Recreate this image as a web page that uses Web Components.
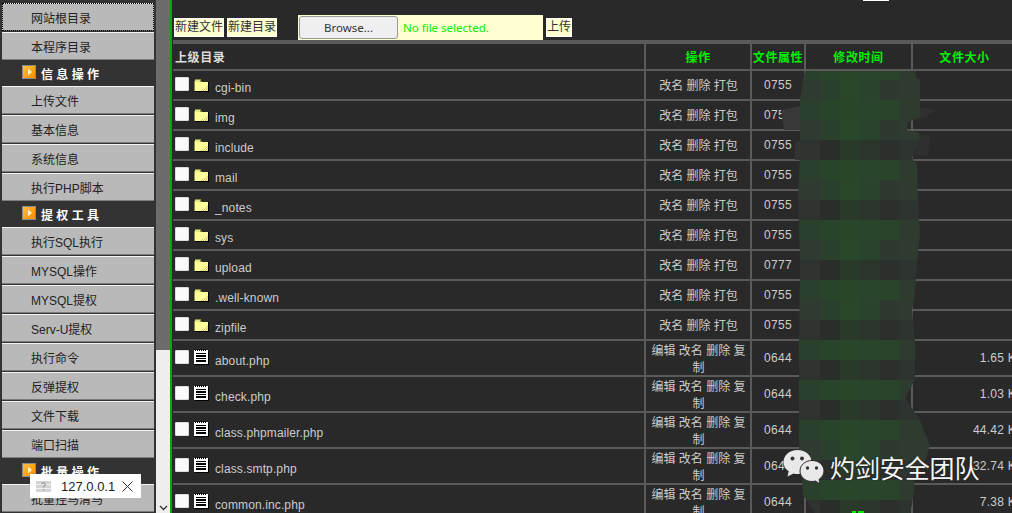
<!DOCTYPE html>
<html lang="zh">
<head>
<meta charset="utf-8">
<title>File manager</title>
<style>
  html,body{margin:0;padding:0;height:513px;overflow:hidden;background:#292929}
  body{font:12px "Liberation Sans","Noto Sans CJK SC",sans-serif;position:relative}
  #page{display:grid;grid-template-columns:156px 14px 2px 1fr;height:513px;width:1012px;overflow:hidden}
</style>
</head>
<body>
<template id="t-side-btn">
  <style>
    :host{display:flex;align-items:center;box-sizing:border-box;height:28px;margin:0 2px 1px 2px;padding:0 0 0 29px;background:#b9b9b9;color:#222;border-top:1px solid #f4f4f4;border-bottom:1px solid #7c7c7c;font-size:12px;white-space:nowrap;width:152px}
    :host([focused]){outline:1px dotted #000;outline-offset:-1px}
  </style><slot></slot>
</template>
<template id="t-side-head">
  <style>
    :host{display:flex;align-items:center;box-sizing:border-box;height:26px;padding-left:22px;gap:5px;color:#fff;font-weight:bold;font-size:12px;white-space:pre}
    svg{display:block;flex:none;margin-top:-3px}
  </style>
  <svg width="14" height="14" viewBox="0 0 14 14"><defs><linearGradient id="o" x1="0" y1="0" x2="1" y2="1"><stop offset="0" stop-color="#ffc040"/><stop offset="1" stop-color="#ff8a00"/></linearGradient></defs><rect x=".5" y=".5" width="13" height="13" fill="url(#o)" stroke="#8a8a8a"/><path d="M6 3.500 10 7 6 10.500Z" fill="#fff6c8"/></svg><slot></slot>
</template>
<template id="t-sidebar">
  <style>:host{display:block;background:#333;padding-top:3px;height:510px;overflow:hidden;position:relative}</style><slot></slot>
</template>
<template id="t-scroll">
  <style>
    :host{display:flex;flex-direction:column;background:#eee}
    .thumb{height:350px;background:#6c6c6c}
    .rest{flex:1;display:flex;align-items:flex-end;justify-content:center;padding-bottom:2px}
    svg{display:block}
  </style>
  <div class="thumb"></div><div class="rest"><svg width="9" height="6" viewBox="0 0 9 6"><path d="M1 1 4.500 4.500 8 1" fill="none" stroke="#333" stroke-width="1.3"/></svg></div>
</template>
<template id="t-tool-btn">
  <style>:host{display:block;box-sizing:border-box;height:19px;line-height:19px;padding:0 1px;background:#ffffcf;color:#333;font-size:12px;box-shadow:inset 0 0 0 1px #fff;white-space:nowrap}</style><slot></slot>
</template>
<template id="t-toolbar">
  <style>
    :host{display:flex;align-items:flex-end;height:40px;background:#292929;padding-left:1px;position:relative}
    x-tool-btn{margin-bottom:3px}
    .a{margin-left:3px}
    .file{display:flex;box-sizing:border-box;width:245px;height:25px;margin-left:21px;background:#ffffcf;padding:1px;align-items:center}
    .browse{box-sizing:border-box;width:99px;height:23px;background:#efefef;border:1px solid #9a9a9a;border-radius:3px;text-align:center;color:#333;font:11.500px/21px "Noto Sans",sans-serif}
    .none{margin-left:5px;color:#00f000;font:11.500px "Noto Sans",sans-serif}
    .up{margin-left:3px}
    .stub{position:absolute;left:690px;top:0;width:26px;height:1px;background:#fff}
  </style>
  <x-tool-btn>新建文件</x-tool-btn><x-tool-btn class="a">新建目录</x-tool-btn>
  <div class="file"><div class="browse">Browse...</div><div class="none">No file selected.</div></div>
  <x-tool-btn class="up">上传</x-tool-btn><div class="stub"></div>
</template>
<template id="t-table">
  <style>:host{display:block;background:#5a5a5a;padding-top:4px;width:843px}</style><slot></slot>
</template>
<template id="t-head">
  <style>
    :host{display:grid;grid-template-columns:471px 104px 52px 105px 103px;column-gap:2px;box-sizing:border-box;height:27px;padding-bottom:2px}
    div{background:#292929;display:flex;align-items:center;justify-content:center;color:#00f000;font-weight:bold;font-size:12px;letter-spacing:.6px;white-space:nowrap;box-sizing:border-box}
    .l{justify-content:flex-start;color:#ddd;padding-left:2px}
  </style>
  <div class="l">上级目录</div><div>操作</div><div>文件属性</div><div>修改时间</div><div>文件大小</div>
</template>
<template id="t-row">
  <style>
    :host{display:grid;grid-template-columns:471px 104px 52px 105px 103px;column-gap:2px;padding-bottom:2px;color:#ccc;font-size:12px}
    .c{background:#292929;display:flex;align-items:center;justify-content:center;text-align:center;box-sizing:border-box;min-width:0}
    .n{justify-content:flex-start;align-items:flex-start;padding-left:2px}
    .cb{box-sizing:border-box;width:14px;height:14px;background:#fafafa;border:1px solid #dcdcdc;border-radius:1px;flex:none}
    svg{display:block;flex:none;margin-left:5px}
    .t{margin-left:6px;white-space:nowrap;letter-spacing:.12px}
    .ops{line-height:17px;padding:2px 0 0 1px;align-items:flex-start}
    .perm{letter-spacing:.3px}
    .s{justify-content:flex-end;letter-spacing:.25px}
    :host([kind=dir]) .c{height:28px}
    :host([kind=dir]) .cb{margin-top:6px}
    :host([kind=dir]) svg{margin-top:8px}
    :host([kind=dir]) .t{margin-top:10px}
    :host([kind=dir]) .ops{padding-top:7px}
    :host([kind=dir]) .perm{padding-bottom:1px}
    :host([kind=file]) .c{height:34px}
    :host([kind=file]) .cb{margin-top:9px}
    :host([kind=file]) svg{margin-top:8px}
    :host([kind=file]) .t{margin-top:13px}
  </style>
  <div class="c n"><span class="cb"></span><span id="i" style="display:contents"></span><span class="t" id="name"></span></div>
  <div class="c ops" id="ops"></div>
  <div class="c perm" id="perm"></div>
  <div class="c"></div>
  <div class="c s" id="size"></div>
</template>
<template id="t-toast">
  <style>
    :host{position:absolute;left:30px;top:474px;display:flex;align-items:center;box-sizing:border-box;width:111px;height:24px;background:#fff;color:#222;font:13px "Liberation Sans",sans-serif;padding-left:6px}
    .q{display:block;flex:none}
    span{margin-left:10px}
    .x{margin-left:7px;display:block;flex:none}
  </style>
  <svg class="q" width="15" height="11" viewBox="0 0 15 11"><rect width="15" height="11" fill="#d4d4d4"/><rect y="3" width="15" height="1" fill="#efefef"/><rect y="7" width="15" height="1" fill="#efefef"/><path d="M5.500 3.200C6 1.500 9 1.500 9.300 3.200 9.500 4.600 7.500 4.800 7.500 6.500M7.500 8v1.500" fill="none" stroke="#9d9d9d" stroke-width="1.2"/></svg>
  <span>127.0.0.1</span>
  <svg class="x" width="11" height="11" viewBox="0 0 11 11"><path d="M.5.500 10.500 10.500M10.500.500.5 10.500" stroke="#333" stroke-width="1" fill="none"/></svg>
</template>
<template id="t-mark">
  <style>
    :host{position:absolute;left:783px;top:447px;display:flex;align-items:center;color:#f6f6f6;font:25px/36px "Noto Sans CJK SC",sans-serif;white-space:nowrap;text-shadow:0 0 2px rgba(0,0,0,.45)}
    svg{display:block;flex:none;margin-top:2px}
    span{margin-left:6px;letter-spacing:-.1px;margin-top:2px}
  </style>
  <svg width="41" height="36" viewBox="0 0 41 36">
    <path d="M14.500 1C6.500 1 .5 6.500 .5 13c0 3.700 2 7 5.200 9.300L4.500 27.500l6-3c1.300.4 2.600.6 4 .6 8 0 14-5.400 14-12.100S22.500 1 14.500 1Z" fill="#e9e9e9"/>
    <circle cx="9.500" cy="9.500" r="2" fill="#333"/><circle cx="19" cy="9.500" r="2" fill="#333"/>
    <path d="M29 11.500c-6.800 0-12 4.700-12 10.500s5.200 10.500 12 10.500c1.200 0 2.300-.2 3.400-.5l4.600 3-1-4.600c3-1.900 5-5 5-8.400 0-5.800-5.200-10.500-12-10.500Z" fill="#e9e9e9" stroke="#2b2b2b" stroke-width="1"/>
    <circle cx="24.500" cy="19" r="1.700" fill="#333"/><circle cx="33.500" cy="19" r="1.700" fill="#333"/>
  </svg><span><slot></slot></span>
</template>
<div id="page">
  <x-sidebar>
    <x-side-btn focused>网站根目录</x-side-btn>
    <x-side-btn style="margin-bottom:0">本程序目录</x-side-btn>
    <x-side-head>信 息 操 作</x-side-head>
    <x-side-btn>上传文件</x-side-btn><x-side-btn>基本信息</x-side-btn><x-side-btn>系统信息</x-side-btn><x-side-btn style="margin-bottom:0">执行PHP脚本</x-side-btn>
    <x-side-head>提 权 工 具</x-side-head>
    <x-side-btn>执行SQL执行</x-side-btn><x-side-btn>MYSQL操作</x-side-btn><x-side-btn>MYSQL提权</x-side-btn><x-side-btn>Serv-U提权</x-side-btn><x-side-btn>执行命令</x-side-btn><x-side-btn>反弹提权</x-side-btn><x-side-btn>文件下载</x-side-btn><x-side-btn style="margin-bottom:0">端口扫描</x-side-btn>
    <x-side-head>批 量 操 作</x-side-head>
    <x-side-btn>批量挂马清马</x-side-btn>
  </x-sidebar>
  <x-scroll></x-scroll>
  <div style="background:#0aa50a"></div>
  <main style="min-width:0;overflow:hidden;padding-left:1px;background:#292929">
    <x-toolbar></x-toolbar>
    <x-table>
      <x-head></x-head>
      <x-row kind="dir" name="cgi-bin" perm="0755"></x-row>
      <x-row kind="dir" name="img" perm="0755"></x-row>
      <x-row kind="dir" name="include" perm="0755"></x-row>
      <x-row kind="dir" name="mail" perm="0755"></x-row>
      <x-row kind="dir" name="_notes" perm="0755"></x-row>
      <x-row kind="dir" name="sys" perm="0755"></x-row>
      <x-row kind="dir" name="upload" perm="0777"></x-row>
      <x-row kind="dir" name=".well-known" perm="0755"></x-row>
      <x-row kind="dir" name="zipfile" perm="0755"></x-row>
      <x-row kind="file" name="about.php" perm="0644" size="1.65 K"></x-row>
      <x-row kind="file" name="check.php" perm="0644" size="1.03 K"></x-row>
      <x-row kind="file" name="class.phpmailer.php" perm="0644" size="44.42 K"></x-row>
      <x-row kind="file" name="class.smtp.php" perm="0644" size="32.74 K"></x-row>
      <x-row kind="file" name="common.inc.php" perm="0644" size="7.38 K"></x-row>
    </x-table>
  </main>
</div>
<x-redact></x-redact>
<x-toast></x-toast>
<x-mark>灼剑安全团队</x-mark>
<script>
const FOLDER=`<svg width="15" height="13" viewBox="0 0 15 13" shape-rendering="crispEdges"><defs><pattern id="d" width="2" height="2" patternUnits="userSpaceOnUse"><rect width="2" height="2" fill="#ffff99"/><rect width="1" height="1" fill="#d9c27a"/><rect x="1" y="1" width="1" height="1" fill="#d9c27a"/></pattern></defs><path d="M0 3V2h1V0h6v2h1v1h6v9H0Z" fill="#8d8d3c"/><rect x="1" y="3" width="13" height="9" fill="#ffff99"/><path d="M1 1h5v2H1Z" fill="#e6e68a"/><path d="M14 5v7H5l2-2h2l2-2h1Z" fill="url(#d)"/><rect x="1" y="12" width="14" height="1" fill="#000"/><rect x="14" y="3" width="1" height="10" fill="#000"/></svg>`;
const DOC=`<svg width="15" height="16" viewBox="0 0 15 16" shape-rendering="crispEdges"><rect x="0" y="1" width="14" height="14" fill="#fff"/><path d="M1 0h1v2H1zM3 0h1v2H3zM5 0h1v2H5zM7 0h1v2H7zM9 0h1v2H9zM11 0h1v2h-1z" fill="#000"/><rect x="2" y="4" width="10" height="1" fill="#000"/><rect x="2" y="6" width="10" height="2" fill="#000"/><rect x="2" y="9" width="10" height="1" fill="#000"/><rect x="2" y="11" width="10" height="2" fill="#000"/><rect x="14" y="2" width="1" height="14" fill="#000"/><rect x="1" y="15" width="14" height="1" fill="#000"/></svg>`;
function plain(tag,id){customElements.define(tag,class extends HTMLElement{constructor(){super();this.attachShadow({mode:'open'}).appendChild(document.getElementById(id).content.cloneNode(true));}});}
plain('x-side-btn','t-side-btn');plain('x-side-head','t-side-head');plain('x-sidebar','t-sidebar');plain('x-scroll','t-scroll');
plain('x-tool-btn','t-tool-btn');plain('x-toolbar','t-toolbar');plain('x-table','t-table');plain('x-head','t-head');plain('x-toast','t-toast');plain('x-mark','t-mark');
customElements.define('x-row',class extends HTMLElement{
  constructor(){super();this.attachShadow({mode:'open'}).appendChild(document.getElementById('t-row').content.cloneNode(true));}
  connectedCallback(){
    const r=this.shadowRoot,k=this.getAttribute('kind');
    r.getElementById('i').innerHTML=k==='dir'?FOLDER:DOC;
    r.getElementById('name').textContent=this.getAttribute('name');
    r.getElementById('ops').textContent=k==='dir'?'改名 删除 打包':'编辑 改名 删除 复制';
    r.getElementById('perm').textContent=this.getAttribute('perm');
    r.getElementById('size').textContent=this.getAttribute('size')||'';
  }
});
customElements.define('x-redact',class extends HTMLElement{
  constructor(){
    super();
    const root=this.attachShadow({mode:'open'});
    const xs=[790,820,840,860,880,900],ws=[30,20,20,20,20,40];
    const P={g:['#2a3f2c','#28442a','#29462b','#29452b','#29442b','#2e3b2f'],
             m:['#2f3a30','#2a402c','#29472b','#2a432c','#2d3a2f','#2f3a30'],
             d:['#2f3330','#2a2d2a','#2a3a2a','#2a352b','#2b302c','#2e3430']};
    const bands=[[60,20,'g'],[80,20,'m'],[100,20,'g'],[120,20,'m'],[140,20,'d'],[160,20,'g'],[180,20,'m'],[200,20,'d'],[220,20,'g'],[240,20,'m'],[260,20,'d'],[280,20,'g'],[300,20,'m'],[320,20,'d'],[340,20,'g'],[360,20,'d'],[380,20,'g'],[400,20,'d'],[420,20,'g'],[440,20,'m'],[460,20,'d'],[480,20,'g'],[500,13,'d']];
    let rects='';
    for(const [y,h,p] of bands) xs.forEach((x,i)=>{rects+=`<rect x="${x}" y="${y}" width="${ws[i]}" height="${h}" fill="${P[p][i]}"/>`;});
    const poly='805,71 915,71 916,78 920,80 920,118 908,122 907,130 920,133 918,145 912,158 917,165 918,200 920,235 917,265 914,300 912,310 915,340 915,380 905,398 920,420 930,445 925,462 915,480 912,505 910,513 815,513 803,495 802,480 799,470 799,340 800,260 798,200 800,150 800,100 803,80';
    root.innerHTML=`<style>:host{position:absolute;left:0;top:0;width:1012px;height:513px;pointer-events:none;display:block}svg{display:block}</style>
    <svg width="1012" height="513" viewBox="0 0 1012 513"><defs><clipPath id="c"><polygon points="${poly}"/></clipPath></defs>
    <path d="M781 110 801 106V130H784Z" fill="#383838"/><path d="M915 106 935 110 925 118H915Z" fill="#303030"/><path d="M915 133 930 136 928 155 916 156Z" fill="#2f2f2f"/><path d="M795 142 802 140V160H795Z" fill="#333"/>
    <g clip-path="url(#c)">${rects}</g>
    <rect x="852" y="511" width="4" height="2" fill="#00f000"/><rect x="858" y="511" width="6" height="2" fill="#00f000"/></svg>`;
  }
});
</script>
</body>
</html>
